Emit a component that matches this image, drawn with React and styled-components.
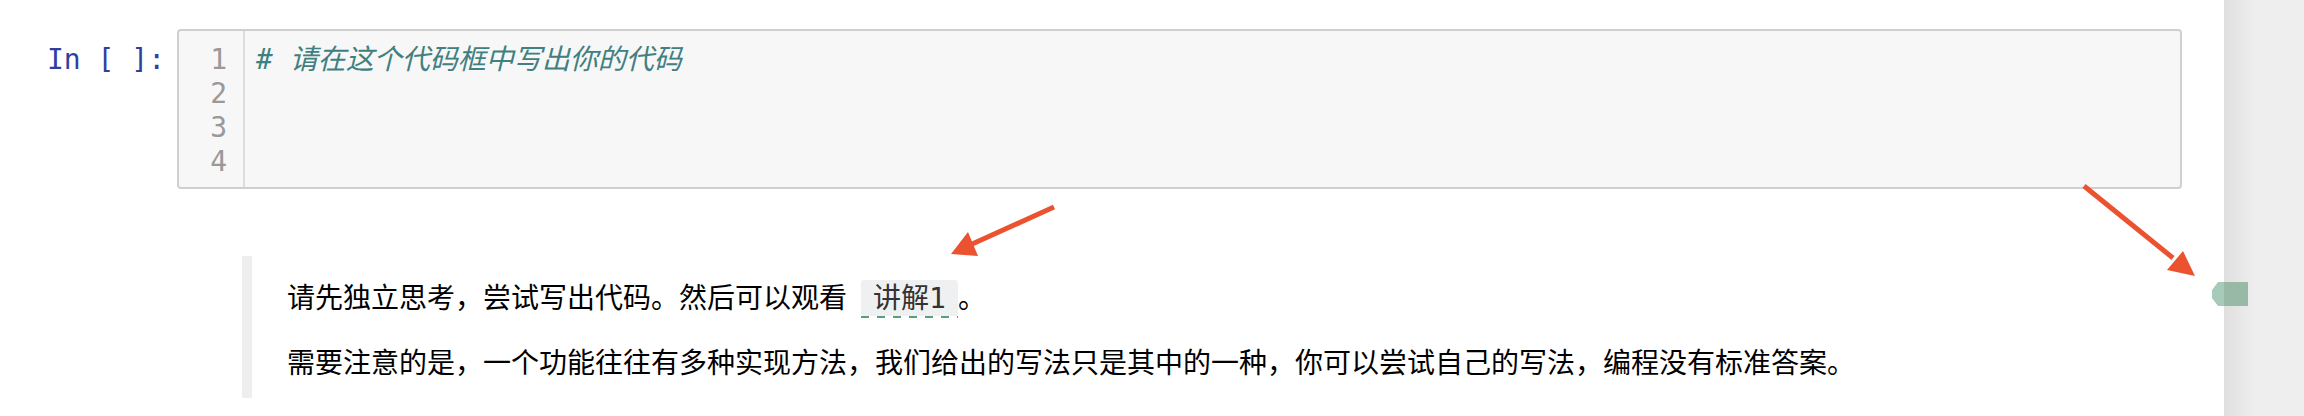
import React from "react";
import styled, { createGlobalStyle } from "styled-components";

const GlobalStyle = createGlobalStyle`
  html, body { margin: 0; padding: 0; background: #fff; }
  body { overflow: hidden; font-family: "Liberation Sans", "Noto Sans CJK SC", sans-serif; }
`;

const Page = styled.div`
  position: relative;
  display: flex;
  width: 2304px;
  height: 416px;
  overflow: hidden;
`;

const Notebook = styled.div`
  flex: 1;
  padding-top: 29px;
  box-sizing: border-box;
`;

const CodeCell = styled.div`
  display: flex;
  padding-right: 42px;
`;

const Prompt = styled.div`
  width: 177px;
  box-sizing: border-box;
  padding: 14px 12px 0 0;
  text-align: right;
  font-family: "DejaVu Sans Mono", monospace;
  font-size: 28px;
  line-height: 34px;
  color: #303f9f;
  white-space: pre;
`;

const InputArea = styled.div`
  flex: 1;
  display: flex;
  border: 2px solid #cfcfcf;
  border-radius: 4px;
  background: #f7f7f7;
`;

const Gutter = styled.div`
  width: 66px;
  box-sizing: border-box;
  border-right: 2px solid #dddddd;
  padding: 12px 16px 8px 0;
  text-align: right;
  font-family: "DejaVu Sans Mono", monospace;
  font-size: 28px;
  line-height: 34px;
  color: #999999;
`;

const LineNo = styled.div`
  height: 34px;
`;

const Lines = styled.div`
  flex: 1;
  padding: 12px 8px 8px 11px;
  font-family: "DejaVu Sans Mono", "Noto Sans CJK SC", monospace;
  font-size: 28px;
  line-height: 34px;
`;

const CodeLine = styled.div`
  height: 34px;
  white-space: pre;
`;

const Comment = styled.span`
  color: #408080;
  font-style: italic;
`;

const MarkdownCell = styled.div`
  margin-top: 67px;
  padding-left: 242px;
`;

const Quote = styled.div`
  border-left: 10px solid #eeeeee;
  padding: 20px 0 17px 35px;
  display: flex;
  flex-direction: column;
  gap: 25px;
`;

const Para = styled.p`
  margin: 0;
  height: 40px;
  font-family: "Noto Sans CJK SC", sans-serif;
  font-size: 28px;
  line-height: 40px;
  color: #000;
  white-space: nowrap;
`;

const InlineCode = styled.code`
  position: relative;
  margin-left: 14px;
  padding: 2px 12px 1px;
  border-radius: 3px;
  background: #eff0f1;
  color: #333;
  font-family: "DejaVu Sans Mono", "Noto Sans CJK SC", monospace;
  font-size: 28px;
  line-height: 40px;
  &::after {
    content: "";
    position: absolute;
    left: 0;
    right: 0;
    bottom: -2px;
    height: 2px;
    background: repeating-linear-gradient(
      to right,
      #5a9f7b 0 8px,
      transparent 8px 16px
    );
  }
`;

const Scrollbar = styled.div`
  width: 80px;
  flex: none;
  background: linear-gradient(
    to right,
    #dfdfdf 0,
    #e6e6e6 14px,
    #ececec 27px,
    #eeeeee 30px,
    #eeeeee 100%
  );
`;

const Overlay = styled.svg`
  position: absolute;
  left: 0;
  top: 0;
  pointer-events: none;
`;

const ARROW = "#eb5230";

function Arrow({ x1, y1, bx, by, tip, c1, c2 }) {
  return (
    <g>
      <line x1={x1} y1={y1} x2={bx} y2={by} stroke={ARROW} strokeWidth="5" />
      <polygon points={`${tip[0]},${tip[1]} ${c1[0]},${c1[1]} ${c2[0]},${c2[1]}`} fill={ARROW} />
    </g>
  );
}

export default function App() {
  return (
    <>
      <GlobalStyle />
      <Page>
        <Notebook>
          <CodeCell>
            <Prompt>In [ ]:</Prompt>
            <InputArea>
              <Gutter>
                {[1, 2, 3, 4].map((n) => (
                  <LineNo key={n}>{n}</LineNo>
                ))}
              </Gutter>
              <Lines>
                <CodeLine>
                  <Comment># 请在这个代码框中写出你的代码</Comment>
                </CodeLine>
                <CodeLine> </CodeLine>
                <CodeLine> </CodeLine>
                <CodeLine> </CodeLine>
              </Lines>
            </InputArea>
          </CodeCell>
          <MarkdownCell>
            <Quote>
              <Para>
                请先独立思考，尝试写出代码。然后可以观看<InlineCode>讲解1</InlineCode>。
              </Para>
              <Para>
                需要注意的是，一个功能往往有多种实现方法，我们给出的写法只是其中的一种，你可以尝试自己的写法，编程没有标准答案。
              </Para>
            </Quote>
          </MarkdownCell>
        </Notebook>
        <Scrollbar />
        <Overlay width="2304" height="416" viewBox="0 0 2304 416">
          <Arrow x1={1054} y1={207} bx={970} by={245} tip={[951, 254]} c1={[968, 232]} c2={[978, 256]} />
          <Arrow x1={2084} y1={186} bx={2173} by={258} tip={[2195, 276]} c1={[2183, 251]} c2={[2167, 270]} />
          <polygon points="2218,282 2224,282 2224,306 2218,306 2212,298 2212,290" fill="#a7cbb9" />
          <rect x="2224" y="282" width="24" height="24" fill="#97b9a6" />
        </Overlay>
      </Page>
    </>
  );
}
